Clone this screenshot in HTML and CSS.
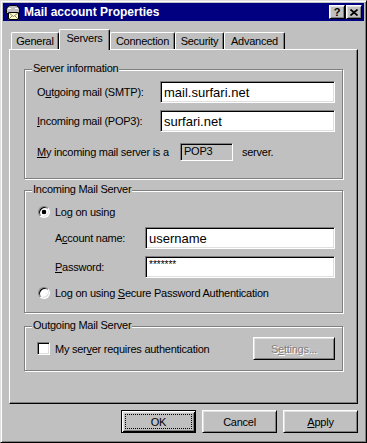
FILE: index.html
```html
<!DOCTYPE html>
<html lang="en">
<head>
    <meta charset="UTF-8">
    <meta name="viewport" content="width=device-width, initial-scale=1.0">
    <title>Mail account Properties</title>
    <link rel="stylesheet" href="styles.css">
</head>
<body>
    <div class="window">
        <div class="titlebar">
            <svg class="title-icon" viewBox="0 0 16 16" width="16" height="16">
                <path d="M1.5 9.5V5.5c0-2 2-4 4.5-4h4c2.5 0 4.5 2 4.5 4v4z" fill="#c0c0c0" stroke="#000"/>
                <path d="M3 4.5h3M10 4.5h3" stroke="#fff"/>
                <rect x="3.5" y="8.5" width="10" height="7" fill="#ffffc0" stroke="#000"/>
                <path d="M3.5 8.5l5 4 5-4M3.5 15.5l3.5-3.5M13.5 15.5l-3.5-3.5" stroke="#808080" fill="none"/>
            </svg>
            <span class="title-text">Mail account Properties</span>
            <div class="title-buttons">
                <span class="title-btn">?</span>
                <span class="title-btn">
                    <svg viewBox="0 0 8 7" width="8" height="7">
                        <path d="M0.5 0.5l7 6M7.5 0.5l-7 6" stroke="#000" stroke-width="1.7"/>
                    </svg>
                </span>
            </div>
        </div>

        <div class="tabs">
            <div class="tab tab-general">General</div>
            <div class="tab tab-servers tab-active">Servers</div>
            <div class="tab tab-connection">Connection</div>
            <div class="tab tab-security">Security</div>
            <div class="tab tab-advanced">Advanced</div>
        </div>

        <div class="panel">
            <div class="group group-info">
                <span class="legend">Server information</span>
                <div class="row">
                    <label class="server-label">O<u>u</u>tgoing mail (SMTP):</label>
                    <input class="field" type="text" value="mail.surfari.net">
                </div>
                <div class="row">
                    <label class="server-label"><u>I</u>ncoming mail (POP3):</label>
                    <input class="field" type="text" value="surfari.net">
                </div>
                <div class="row row-type">
                    <span class="type-label"><u>M</u>y incoming mail server is a</span>
                    <span class="static">POP3</span>
                    <span class="type-suffix">server.</span>
                </div>
            </div>

            <div class="group group-login">
                <span class="legend">Incoming Mail Server</span>
                <div class="option">
                    <span class="radio radio-checked"></span>
                    <span>Lo<u>g</u> on using</span>
                </div>
                <div class="login-fields">
                    <div class="row">
                        <label class="login-label">A<u>c</u>count name:</label>
                        <input class="field" type="text" value="username">
                    </div>
                    <div class="row">
                        <label class="login-label"><u>P</u>assword:</label>
                        <input class="field field-password" type="text" value="*******">
                    </div>
                </div>
                <div class="option">
                    <span class="radio"></span>
                    <span>Log on using <u>S</u>ecure Password Authentication</span>
                </div>
            </div>

            <div class="group group-outgoing">
                <span class="legend">Outgoing Mail Server</span>
                <div class="check-option">
                    <span class="checkbox"></span>
                    <span>My ser<u>v</u>er requires authentication</span>
                </div>
                <button class="btn btn-settings" disabled>S<u>e</u>ttings...</button>
            </div>
        </div>

        <div class="actions">
            <button class="btn btn-default"><span class="focus">OK</span></button>
            <button class="btn">Cancel</button>
            <button class="btn"><u>A</u>pply</button>
        </div>
    </div>
</body>
</html>
```

FILE: styles.css
```css
* { box-sizing: border-box; }
body { margin: 0; font-family: "Liberation Sans", Arial, sans-serif; font-size: 11px; letter-spacing: -0.25px; color: #000; }
u { text-underline-offset: 1px; }

.window {
    width: 367px;
    height: 443px;
    background: #c0c0c0;
    border: 1px solid;
    border-color: #dfdfdf #000 #000 #dfdfdf;
    box-shadow: inset 1px 1px #fff, inset -1px -1px #808080;
    padding: 2px;
    display: flex;
    flex-direction: column;
}

/* Title bar */
.titlebar {
    height: 18px;
    background: #000080;
    color: #fff;
    display: flex;
    align-items: center;
    padding: 0 2px;
}
.title-icon { margin-right: 3px; }
.title-text { flex: 1; font-size: 12px; font-weight: bold; letter-spacing: 0; }
.title-buttons { display: flex; gap: 1px; }
.title-btn {
    width: 16px;
    height: 14px;
    background: #c0c0c0;
    border: 1px solid;
    border-color: #fff #000 #000 #fff;
    box-shadow: inset 1px 1px #dfdfdf, inset -1px -1px #808080;
    display: flex;
    align-items: center;
    justify-content: center;
    color: #000;
    font-size: 11px;
    font-weight: bold;
}

/* Tabs */
.tabs {
    display: flex;
    align-items: flex-end;
    height: 20px;
    margin: 8px 6px 0;
    padding-left: 2px;
    position: relative;
    z-index: 1;
}
.tab {
    height: 17px;
    padding-top: 2px;
    line-height: 13px;
    text-align: center;
    background: #c0c0c0;
    border: 1px solid;
    border-bottom: none;
    border-color: #fff #000 #000 #fff;
    border-radius: 2px 2px 0 0;
    box-shadow: inset -1px 0 #808080;
}
.tab-active { height: 21px; margin-bottom: -1px; }
.tab-general { width: 48px; }
.tab-servers { width: 51px; }
.tab-connection { width: 65px; }
.tab-security { width: 49px; }
.tab-advanced { width: 61px; }

/* Tab page */
.panel {
    height: 355px;
    margin: 0 6px;
    padding: 19px 14px 0;
    border: 1px solid;
    border-color: #fff #000 #000 #fff;
    box-shadow: inset -1px -1px #808080;
}

.group {
    position: relative;
    border: 1px solid #808080;
    box-shadow: inset 1px 1px #fff, 1px 1px #fff;
}
.legend {
    position: absolute;
    top: -8px;
    left: 7px;
    padding: 0 1px;
    line-height: 13px;
    background: #c0c0c0;
}

.row { display: flex; align-items: center; }
.row + .row { margin-top: 7px; }

.field {
    flex: 1;
    min-width: 0;
    height: 22px;
    padding: 0 3px;
    font-family: inherit;
    font-size: 13px;
    letter-spacing: 0;
    color: #000;
    background: #fff;
    border: 1px solid;
    border-color: #808080 #fff #fff #808080;
    box-shadow: inset 1px 1px #000, inset -1px -1px #dfdfdf;
    outline: none;
}
.field-password { font-size: 10px; padding-bottom: 6px; }

/* Server information */
.group-info { padding: 11px 7px 17px 12px; }
.server-label { width: 123px; }
.row.row-type { margin-top: 11px; }
.type-label { width: 143px; }
.static {
    width: 53px;
    height: 18px;
    padding-left: 3px;
    line-height: 15px;
    border: 1px solid;
    border-color: #808080 #fff #fff #808080;
    box-shadow: inset 1px 1px #000;
}
.type-suffix { margin-left: 9px; }

/* Incoming mail server */
.group-login { margin-top: 11px; padding: 15px 7px 13px 13px; }
.option { display: flex; align-items: center; gap: 5px; height: 12px; }
.radio {
    width: 12px;
    height: 12px;
    border-radius: 50%;
    background: #fff;
    border: 1px solid;
    border-color: #808080 #fff #fff #808080;
    box-shadow: inset 1px 1px #000, inset -1px -1px #dfdfdf;
}
.radio-checked { background: radial-gradient(circle, #000 2px, #fff 2.6px); }
.login-fields { margin: 9px 0; padding-left: 17px; }
.login-label { width: 90px; }

/* Outgoing mail server */
.group-outgoing {
    margin-top: 13px;
    padding: 10px 7px 10px 12px;
    display: flex;
    align-items: center;
}
.check-option { flex: 1; display: flex; align-items: center; gap: 5px; }
.checkbox {
    width: 13px;
    height: 13px;
    background: #fff;
    border: 1px solid;
    border-color: #808080 #fff #fff #808080;
    box-shadow: inset 1px 1px #000, inset -1px -1px #dfdfdf;
}

/* Buttons */
.btn {
    width: 75px;
    height: 23px;
    padding: 0;
    font-family: inherit;
    font-size: 11px;
    letter-spacing: inherit;
    color: #000;
    background: #c0c0c0;
    border: 1px solid;
    border-color: #fff #000 #000 #fff;
    box-shadow: inset 1px 1px #dfdfdf, inset -1px -1px #808080;
    display: flex;
    align-items: center;
    justify-content: center;
}
.btn:disabled { color: #808080; text-shadow: 1px 1px #fff; }
.btn-settings { width: 82px; }
.btn-default {
    border-color: #000;
    box-shadow: inset 1px 1px #fff, inset -1px -1px #000, inset 2px 2px #dfdfdf, inset -2px -2px #808080;
    align-items: stretch;
}
.focus {
    flex: 1;
    margin: 3px;
    border: 1px dotted #000;
    display: flex;
    align-items: center;
    justify-content: center;
}

.actions {
    display: flex;
    justify-content: flex-end;
    gap: 6px;
    margin-top: 6px;
    padding-right: 6px;
}
```
